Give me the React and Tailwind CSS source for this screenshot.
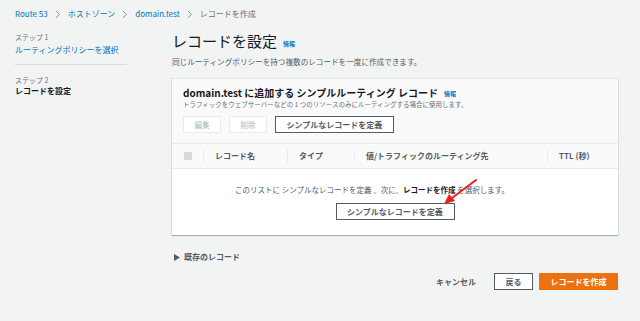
import React from 'react';

const font = { fontFamily: '"Noto Sans CJK JP", "Noto Sans", sans-serif' };

function Crumb({ children, link }) {
  return (
    <span className={link ? 'text-[#0073bb]' : 'text-[#687078]'}>{children}</span>
  );
}

function Sep() {
  return (
    <svg width="6" height="9" viewBox="0 0 6 9" className="mx-[7px]">
      <path d="M1 1l3.5 3.5L1 8" stroke="#879196" strokeWidth="1" fill="none" />
    </svg>
  );
}

export default function App() {
  return (
    <div
      className="relative w-[640px] h-[321px] overflow-hidden bg-[#f2f3f3] text-[#16191f]"
      style={font}
    >
      {/* breadcrumbs */}
      <div className="flex items-center h-[12px] mt-[8px] pl-[15px] text-[8px] leading-[12px]">
        <Crumb link>Route 53</Crumb>
        <Sep />
        <Crumb link>ホストゾーン</Crumb>
        <Sep />
        <Crumb link>domain.test</Crumb>
        <Sep />
        <Crumb>レコードを作成</Crumb>
      </div>

      <div className="flex mt-[12px]">
        {/* steps */}
        <div className="w-[112px] ml-[15px] shrink-0">
          <div className="text-[7px] leading-[10px] text-[#687078]">ステップ 1</div>
          <div className="text-[8px] leading-[12px] mt-[2px] text-[#0073bb]">ルーティングポリシーを選択</div>
          <div className="h-px bg-[#d5dbdb] mt-[8px]" />
          <div className="text-[7px] leading-[10px] text-[#687078] mt-[10px]">ステップ 2</div>
          <div className="text-[8px] leading-[12px] font-bold">レコードを設定</div>
        </div>

        {/* main */}
        <div className="ml-[45px] w-[446px]">
          <div className="flex items-end h-[20px] -mt-[1px]">
            <span className="text-[15px] leading-[20px] text-[#16191f]">レコードを設定</span>
            <span className="ml-[6px] mb-[3px] text-[6px] leading-[8px] font-bold text-[#0073bb]">情報</span>
          </div>
          <div className="text-[7.6px] leading-[10px] text-[#545b64] mt-[6px]">
            同じルーティングポリシーを持つ複数のレコードを一度に作成できます。
          </div>

          {/* card */}
          <div className="mt-[12px] bg-white shadow-[0_1px_1px_rgba(0,28,36,0.25),0_0_0_1px_rgba(0,28,36,0.06)]">
            <div className="bg-[#fafafa] px-[11px] pt-[7px] pb-[10px]">
              <div className="flex items-center h-[14px]">
                <span className="text-[10px] leading-[14px] font-bold">domain.test に追加する シンプルルーティング レコード</span>
                <span className="ml-[6px] text-[6px] font-bold text-[#0073bb]">情報</span>
              </div>
              <div className="text-[6.5px] leading-[9px] text-[#687078]">
                トラフィックをウェブサーバーなどの 1 つのリソースのみにルーティングする場合に使用します。
              </div>
              <div className="flex gap-[8px] mt-[7px]">
                <div className="w-[38px] h-[17px] border border-[#eaeded] bg-white flex items-center justify-center text-[7.5px] text-[#aab7b8]">編集</div>
                <div className="w-[38px] h-[17px] border border-[#eaeded] bg-white flex items-center justify-center text-[7.5px] text-[#aab7b8]">削除</div>
                <div className="w-[119px] h-[17px] border border-[#545b64] bg-white flex items-center justify-center text-[8px] font-bold text-[#545b64]">シンプルなレコードを定義</div>
              </div>
            </div>

            {/* table header */}
            <div className="flex items-center h-[26px] bg-[#fafafa] border-y border-[#eaeded] text-[8px] font-bold text-[#545b64]">
              <div className="w-[31px] flex justify-end pr-[11px]">
                <div className="w-[8px] h-[8px] bg-[#d5dbdb]" />
              </div>
              <div className="w-px h-[14px] bg-[#eaeded]" />
              <div className="w-[83px] pl-[11px]">レコード名</div>
              <div className="w-px h-[14px] bg-[#eaeded]" />
              <div className="w-[66px] pl-[11px]">タイプ</div>
              <div className="w-px h-[14px] bg-[#eaeded]" />
              <div className="w-[192px] pl-[11px]">値/トラフィックのルーティング先</div>
              <div className="w-px h-[14px] bg-[#eaeded]" />
              <div className="pl-[11px]">TTL (秒)</div>
            </div>

            {/* empty body */}
            <div className="h-[66px] flex flex-col items-center pt-[16px]">
              <div className="text-[7.5px] leading-[10px] text-[#545b64] mr-[46px]">
                このリストに シンプルなレコードを定義 、次に、<span className="font-bold text-[#16191f]">レコードを作成</span> を選択します。
              </div>
              <div className="mt-[8px] w-[119px] h-[17px] border border-[#545b64] bg-white flex items-center justify-center text-[8px] font-bold text-[#545b64]">
                シンプルなレコードを定義
              </div>
            </div>
          </div>

          {/* existing records */}
          <div className="flex items-center mt-[16px] h-[12px] text-[8px] font-bold text-[#545b64]">
            <svg width="6" height="7" viewBox="0 0 6 7" className="ml-[2px]">
              <path d="M0 0l6 3.5L0 7z" fill="#545b64" />
            </svg>
            <span className="ml-[4px]">既存のレコード</span>
          </div>

          {/* footer */}
          <div className="flex items-center justify-end mt-[10px]">
            <span className="text-[8px] font-bold text-[#545b64] mr-[18px]">キャンセル</span>
            <div className="w-[39px] h-[17px] border border-[#545b64] bg-white flex items-center justify-center text-[8px] font-bold text-[#545b64]">戻る</div>
            <div className="ml-[6px] w-[79px] h-[17px] bg-[#ec7211] flex items-center justify-center text-[8px] font-bold text-white">レコードを作成</div>
          </div>
        </div>
      </div>

      {/* red annotation arrow */}
      <svg className="absolute left-0 top-0 pointer-events-none" width="640" height="321">
        <path d="M476 180L452 198" stroke="#e8211a" strokeWidth="2" strokeLinecap="round" />
        <path d="M444 204l5-10 6 7z" fill="#e8211a" />
      </svg>
    </div>
  );
}
